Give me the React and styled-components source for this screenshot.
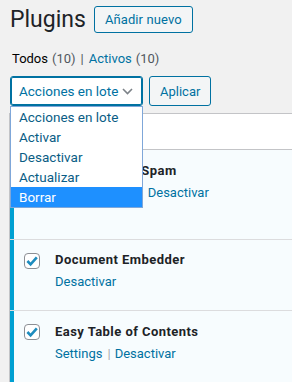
import React from 'react'
import styled, { createGlobalStyle } from 'styled-components'

const GlobalStyle = createGlobalStyle`
  html, body {
    margin: 0;
    padding: 0;
    background: #f1f1f1;
    overflow: hidden;
  }
  body {
    font-family: Roboto, "Liberation Sans", sans-serif;
    color: #1d2327;
  }
`

const BLUE = '#0071a1'

const Wrap = styled.div`
  padding: 6px 0 0 10px;
`

const Header = styled.div`
  display: flex;
  align-items: center;
  gap: 8px;
`

const Title = styled.h1`
  margin: 0;
  font-size: 23px;
  font-weight: 400;
  line-height: 27px;
  color: #1d2327;
`

const OutlineButton = styled.button`
  height: ${p => p.h || 27}px;
  padding: 0 ${p => p.px || 10}px;
  border: 1px solid ${BLUE};
  border-radius: 3px;
  background: #f3f5f6;
  color: ${BLUE};
  font-family: inherit;
  font-size: 13px;
  letter-spacing: ${p => p.ls || 0}px;
  cursor: pointer;
`

const SubNav = styled.ul`
  display: flex;
  margin: 16px 0 0 2px;
  padding: 0;
  list-style: none;
  font-size: 13px;
  line-height: 20px;
  color: #50575e;
`

const SubItem = styled.li`
  display: flex;
  gap: 4px;
`

const SubLink = styled.a`
  color: ${p => (p.current ? '#000' : BLUE)};
  text-decoration: none;
`

const Sep = styled.span`
  padding: 0 5px 0 5px;
  color: #50575e;
`

const Actions = styled.div`
  display: flex;
  gap: 6px;
  margin-top: 7px;
`

const SelectWrap = styled.div`
  position: relative;
`

const Select = styled.div`
  box-sizing: border-box;
  width: 133px;
  height: 30px;
  display: flex;
  align-items: center;
  justify-content: space-between;
  padding: 0 9px 0 8px;
  border: 1px solid ${BLUE};
  box-shadow: 0 0 0 1px ${BLUE} inset;
  border-radius: 3px;
  background: #fff;
  color: ${BLUE};
  font-size: 13.5px;
`

const Menu = styled.ul`
  position: absolute;
  z-index: 5;
  top: 30px;
  left: 0;
  box-sizing: border-box;
  width: 133px;
  margin: 0;
  padding: 0;
  list-style: none;
  background: #fff;
  border: 1px solid #7fa7d9;
`

const Option = styled.li`
  height: 20px;
  line-height: 20px;
  padding-left: 8px;
  font-size: 13.5px;
  color: ${p => (p.selected ? '#fff' : '#0a5d85')};
  background: ${p => (p.selected ? '#1e90ff' : 'transparent')};
`

const Table = styled.div`
  margin: 7px 0 0 -1px;
  border-top: 1px solid #c3c4c7;
  border-left: 1px solid #c3c4c7;
  background: #fff;
`

const HeadRow = styled.div`
  display: flex;
  align-items: center;
  height: 35px;
  border-bottom: 1px solid #c3c4c7;
`

const Row = styled.div`
  display: flex;
  align-items: flex-start;
  background: #f7fcfe;
  border-bottom: 1px solid #dcdcde;
  padding-bottom: ${p => p.pb}px;
`

const CheckCell = styled.div`
  box-sizing: border-box;
  width: 45px;
  align-self: stretch;
  padding: ${p => (p.head ? '0 0 0 14px' : '13px 0 0 10px')};
  border-left: ${p => (p.head ? 'none' : '4px solid #00a0d2')};
  margin-bottom: ${p => (p.head ? 0 : -p.pb)}px;
  display: flex;
  align-items: ${p => (p.head ? 'center' : 'flex-start')};
`

const NameCell = styled.div`
  padding-top: ${p => p.pt}px;
  font-size: 13px;
`

const Name = styled.strong`
  display: block;
  line-height: 20px;
  font-weight: 700;
  letter-spacing: 0.45px;
  color: #1d2327;
`

const RowActions = styled.div`
  margin-top: 2px;
  line-height: 20px;
  color: #a7aaad;
  white-space: nowrap;
`

const ActionLink = styled.a`
  color: ${BLUE};
  text-decoration: none;
`

const ActionSep = styled.span`
  padding: 0 4px 0 5px;
`

const Box = styled.span`
  box-sizing: border-box;
  width: 16px;
  height: 16px;
  border: 1px solid #8c8f94;
  border-radius: 4px;
  background: #fff;
  display: flex;
  align-items: center;
  justify-content: center;
`

const Checkbox = ({ checked }) => (
  <Box>
    {checked && (
      <svg width='14' height='14' viewBox='0 0 14 14'>
        <path d='M2.4 7 L5.6 10.4 L11.8 3.4' fill='none' stroke='#1e8cbe' strokeWidth='2.6' />
      </svg>
    )}
  </Box>
)

const Chevron = () => (
  <svg width='11' height='7' viewBox='0 0 11 7'>
    <path d='M1 1 L5.5 5.5 L10 1' fill='none' stroke='#7c8288' strokeWidth='1.6' />
  </svg>
)

const plugins = [
  { name: 'Akismet Anti-Spam', actions: ['Configuración', 'Desactivar'], pt: 11, pb: 36 },
  { name: 'Document Embedder', actions: ['Desactivar'], pt: 10, pb: 18 },
  { name: 'Easy Table of Contents', actions: ['Settings', 'Desactivar'], pt: 11, pb: 18 }
]

const options = ['Acciones en lote', 'Activar', 'Desactivar', 'Actualizar', 'Borrar']

export default function App () {
  return (
    <Wrap>
      <GlobalStyle />
      <Header>
        <Title>Plugins</Title>
        <OutlineButton ls={0.1}>Añadir nuevo</OutlineButton>
      </Header>
      <SubNav>
        <SubItem>
          <SubLink current>Todos</SubLink> <span>(10)</span>
        </SubItem>
        <Sep>|</Sep>
        <SubItem>
          <SubLink>Activos</SubLink> <span>(10)</span>
        </SubItem>
      </SubNav>
      <Actions>
        <SelectWrap>
          <Select>
            <span>Acciones en lote</span>
            <Chevron />
          </Select>
          <Menu>
            {options.map(o => (
              <Option key={o} selected={o === 'Borrar'}>{o}</Option>
            ))}
          </Menu>
        </SelectWrap>
        <OutlineButton h={30} px={10}>Aplicar</OutlineButton>
      </Actions>
      <Table>
        <HeadRow>
          <CheckCell head><Checkbox /></CheckCell>
        </HeadRow>
        {plugins.map(p => (
          <Row key={p.name} pb={p.pb}>
            <CheckCell pb={p.pb}><Checkbox checked /></CheckCell>
            <NameCell pt={p.pt}>
              <Name>{p.name}</Name>
              <RowActions>
                {p.actions.map((a, i) => (
                  <React.Fragment key={a}>
                    {i > 0 && <ActionSep>|</ActionSep>}
                    <ActionLink>{a}</ActionLink>
                  </React.Fragment>
                ))}
              </RowActions>
            </NameCell>
          </Row>
        ))}
      </Table>
    </Wrap>
  )
}
